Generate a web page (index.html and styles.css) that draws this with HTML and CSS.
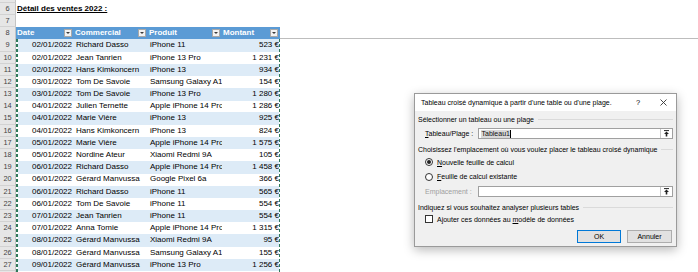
FILE: index.html
```html
<!DOCTYPE html>
<html lang="fr">
<head>
<meta charset="utf-8">
<title>Détail des ventes 2022</title>
<link rel="stylesheet" href="styles.css">
</head>
<body>
<div class="sheet">
  <div class="rows">
    <div class="row top"><div class="rh"></div></div>
    <div class="row"><div class="rh">6</div><div class="c title-cell">Détail des ventes 2022 :</div></div>
    <div class="row"><div class="rh">7</div></div>
    <div class="row hdr">
      <div class="rh">8</div>
      <div class="c h"><span>Date</span><span class="fb"></span></div>
      <div class="c h"><span>Commercial</span><span class="fb"></span></div>
      <div class="c h"><span>Produit</span><span class="fb"></span></div>
      <div class="c h"><span>Montant</span><span class="fb"></span></div>
    </div>
    <div class="row band"><div class="rh">9</div><div class="c r">02/01/2022</div><div class="c">Richard Dasso</div><div class="c">iPhone 11</div><div class="c r m">523&nbsp;€</div></div>
    <div class="row"><div class="rh">10</div><div class="c r">02/01/2022</div><div class="c">Jean Tanrien</div><div class="c">iPhone 13 Pro</div><div class="c r m">1&nbsp;231&nbsp;€</div></div>
    <div class="row band"><div class="rh">11</div><div class="c r">02/01/2022</div><div class="c">Hans Kimkoncern</div><div class="c">iPhone 13</div><div class="c r m">934&nbsp;€</div></div>
    <div class="row"><div class="rh">12</div><div class="c r">03/01/2022</div><div class="c">Tom De Savoie</div><div class="c">Samsung Galaxy A1</div><div class="c r m">154&nbsp;€</div></div>
    <div class="row band"><div class="rh">13</div><div class="c r">03/01/2022</div><div class="c">Tom De Savoie</div><div class="c">iPhone 13 Pro</div><div class="c r m">1&nbsp;280&nbsp;€</div></div>
    <div class="row"><div class="rh">14</div><div class="c r">04/01/2022</div><div class="c">Julien Ternette</div><div class="c">Apple iPhone 14 Pro</div><div class="c r m">1&nbsp;286&nbsp;€</div></div>
    <div class="row band"><div class="rh">15</div><div class="c r">04/01/2022</div><div class="c">Marie Vière</div><div class="c">iPhone 13</div><div class="c r m">925&nbsp;€</div></div>
    <div class="row"><div class="rh">16</div><div class="c r">04/01/2022</div><div class="c">Hans Kimkoncern</div><div class="c">iPhone 13</div><div class="c r m">824&nbsp;€</div></div>
    <div class="row band"><div class="rh">17</div><div class="c r">05/01/2022</div><div class="c">Marie Vière</div><div class="c">Apple iPhone 14 Pro</div><div class="c r m">1&nbsp;575&nbsp;€</div></div>
    <div class="row"><div class="rh">18</div><div class="c r">05/01/2022</div><div class="c">Nordine Ateur</div><div class="c">Xiaomi Redmi 9A</div><div class="c r m">105&nbsp;€</div></div>
    <div class="row band"><div class="rh">19</div><div class="c r">06/01/2022</div><div class="c">Richard Dasso</div><div class="c">Apple iPhone 14 Pro</div><div class="c r m">1&nbsp;458&nbsp;€</div></div>
    <div class="row"><div class="rh">20</div><div class="c r">06/01/2022</div><div class="c">Gérard Manvussa</div><div class="c">Google Pixel 6a</div><div class="c r m">366&nbsp;€</div></div>
    <div class="row band"><div class="rh">21</div><div class="c r">06/01/2022</div><div class="c">Richard Dasso</div><div class="c">iPhone 11</div><div class="c r m">565&nbsp;€</div></div>
    <div class="row"><div class="rh">22</div><div class="c r">06/01/2022</div><div class="c">Tom De Savoie</div><div class="c">iPhone 11</div><div class="c r m">554&nbsp;€</div></div>
    <div class="row band"><div class="rh">23</div><div class="c r">07/01/2022</div><div class="c">Jean Tanrien</div><div class="c">iPhone 11</div><div class="c r m">554&nbsp;€</div></div>
    <div class="row"><div class="rh">24</div><div class="c r">07/01/2022</div><div class="c">Anna Tomie</div><div class="c">Apple iPhone 14 Pro</div><div class="c r m">1&nbsp;315&nbsp;€</div></div>
    <div class="row band"><div class="rh">25</div><div class="c r">08/01/2022</div><div class="c">Gérard Manvussa</div><div class="c">Xiaomi Redmi 9A</div><div class="c r m">95&nbsp;€</div></div>
    <div class="row"><div class="rh">26</div><div class="c r">08/01/2022</div><div class="c">Gérard Manvussa</div><div class="c">Samsung Galaxy A1</div><div class="c r m">155&nbsp;€</div></div>
    <div class="row band"><div class="rh">27</div><div class="c r">09/01/2022</div><div class="c">Gérard Manvussa</div><div class="c">iPhone 13 Pro</div><div class="c r m">1&nbsp;256&nbsp;€</div></div>
    <div class="row"><div class="rh"></div></div>
  </div>

  <div class="ants"></div>

  <div class="dlg">
    <div class="dlg-title">
      <span class="ttl">Tableau croisé dynamique à partir d'une table ou d'une plage.</span>
      <span class="help">?</span>
      <span class="close"><svg width="7" height="7" viewBox="0 0 7 7"><path d="M0.5 0.5L6.5 6.5M6.5 0.5L0.5 6.5" stroke="#333" stroke-width="0.9" fill="none"/></svg></span>
    </div>
    <div class="dlg-body">
      <div class="grp g1"><span>Sélectionner un tableau ou une plage</span><i class="sep"></i></div>
      <div class="field"><span class="lbl"><u>T</u>ableau/Plage :</span><div class="inp"><span class="sel">Tableau1</span><span class="caret"></span><span class="pick"><svg width="7" height="7" viewBox="0 0 7 7"><path d="M1 0.6H6" stroke="#222" stroke-width="1"/><path d="M3.5 1.5L6 4H4.3V6.6H2.7V4H1Z" fill="#222"/></svg></span></div></div>
      <div class="grp g2"><span>Choisissez l'emplacement où vous voulez placer le tableau croisé dynamique</span><i class="sep"></i></div>
      <div class="opt o1"><span class="radio on"></span><span><u>N</u>ouvelle feuille de calcul</span></div>
      <div class="opt o2"><span class="radio"></span><span><u>F</u>euille de calcul existante</span></div>
      <div class="field"><span class="lbl dim">Emplacement :</span><div class="inp"><span class="pick"><svg width="7" height="7" viewBox="0 0 7 7"><path d="M1 0.6H6" stroke="#222" stroke-width="1"/><path d="M3.5 1.5L6 4H4.3V6.6H2.7V4H1Z" fill="#222"/></svg></span></div></div>
      <div class="grp g3"><span>Indiquez si vous souhaitez analyser plusieurs tables</span><i class="sep"></i></div>
      <div class="opt o3"><span class="chk"></span><span>Ajouter ces données au <u>m</u>odèle de données</span></div>
      <div class="btns"><span class="btn def">OK</span><span class="btn">Annuler</span></div>
    </div>
  </div>
</div>
</body>
</html>
```

FILE: styles.css
```css
* { box-sizing: border-box; }
html, body { margin: 0; padding: 0; background: #fff; }
body { width: 698px; height: 272px; overflow: hidden; font-family: "Liberation Sans", Arial, sans-serif; }

.sheet { position: relative; width: 698px; height: 272px; overflow: hidden; background: #fff; }

.rows { display: flex; flex-direction: column; }
.row {
  display: grid;
  grid-template-columns: 16px 58px 74px 74px 58px 1fr;
  height: 12.2px;
  flex: none;
  font-size: 8px;
  line-height: 12px;
  color: #000;
}
.row.top { height: 2.8px; }

.rh {
  background: #e6e6e6;
  border-right: 1px solid #c4c4c4;
  border-bottom: 1px solid #d2d2d2;
  color: #444;
  font-size: 7.4px;
  text-align: center;
  line-height: 11.5px;
}

.c { white-space: nowrap; overflow: hidden; padding: 0 2px; }
.r { text-align: right; }
.c.m { padding-right: 1px; overflow: visible; }

.title-cell {
  grid-column: 2 / span 3;
  font-weight: bold;
  text-decoration: underline;
  padding-left: 1px;
  overflow: visible;
}

.hdr { border-bottom: 1px solid #bdbdbd; }
.hdr .rh { border-bottom: none; }
.c.h {
  background: #5b9bd5;
  color: #fff;
  font-weight: bold;
  display: flex;
  align-items: center;
  justify-content: space-between;
  padding: 0 2px 0 1px;
}
.fb {
  width: 8px;
  height: 8px;
  flex: none;
  background: #f3f3f3;
  border: 1px solid #a8a8a8;
  display: flex;
  align-items: center;
  justify-content: center;
}
.fb::after {
  content: "";
  border-left: 2px solid transparent;
  border-right: 2px solid transparent;
  border-top: 2px solid #3a3a3a;
}

.band .c { background: #ddebf7; }

.ants {
  position: absolute;
  left: 16px;
  top: 39.4px;
  width: 264px;
  bottom: 0;
  pointer-events: none;
}
.ants::before, .ants::after {
  content: "";
  position: absolute;
  top: 0;
  bottom: 0;
  width: 2px;
  background: repeating-linear-gradient(to bottom, #2f7a5a 0 3px, rgba(255,255,255,0.9) 3px 5px);
}
.ants::before { left: 0; }
.ants::after { right: 0; width: 1.5px; }

/* Dialog */
.dlg {
  position: absolute;
  left: 414px;
  top: 93px;
  width: 263px;
  height: 154px;
  border: 1px solid #9a9a9a;
  background: #f0f0f0;
  box-shadow: 0 3px 10px rgba(0, 0, 0, 0.28);
  font-size: 7px;
  color: #000;
  display: flex;
  flex-direction: column;
}
.dlg-title {
  height: 17px;
  flex: none;
  background: #fff;
  display: flex;
  align-items: center;
  padding-left: 6px;
}
.ttl { flex: 1; white-space: nowrap; }
.help { width: 14px; text-align: center; font-size: 7.5px; }
.close { width: 26px; display: flex; justify-content: center; align-items: center; margin-left: 5px; }

.dlg-body {
  flex: 1;
  display: flex;
  flex-direction: column;
  padding: 0 3px 3px 3px;
}
.grp { display: flex; align-items: center; white-space: nowrap; height: 16px; flex: none; }
.grp.g1 { height: 17px; }
.grp.g2, .grp.g3 { margin-top: 2px; }
.sep { flex: 1; height: 1px; background: #dadada; margin-left: 4px; }

.field { display: flex; align-items: center; height: 11px; flex: none; padding-left: 7px; }
.lbl { width: 53px; flex: none; white-space: nowrap; }
.lbl.dim { color: #a0a0a0; }
.inp {
  flex: 1;
  height: 11px;
  background: #fff;
  border: 1px solid #a0a0a0;
  display: flex;
  align-items: center;
  padding-left: 2px;
}
.sel { background: #d8d8d8; color: #111; padding: 0 0.5px; line-height: 8px; }
.caret { width: 1px; height: 8px; background: #000; }
.pick {
  margin-left: auto;
  width: 12px;
  height: 9px;
  border-left: 1px solid #c8c8c8;
  display: flex;
  align-items: center;
  justify-content: center;
}

.opt { display: flex; align-items: center; padding-left: 7px; flex: none; gap: 4px; white-space: nowrap; }
.o1 { height: 10px; }
.o2 { height: 19px; }
.o3 { height: 8px; }
.radio {
  width: 8px; height: 8px; border-radius: 50%;
  border: 1px solid #333; background: #fff;
  display: flex; align-items: center; justify-content: center;
  flex: none;
}
.radio.on::after { content: ""; width: 4px; height: 4px; border-radius: 50%; background: #222; }
.chk { width: 8px; height: 8px; border: 1px solid #333; background: #fff; flex: none; }

.btns { display: flex; justify-content: flex-end; gap: 6px; margin-top: 7px; height: 13px; flex: none; padding-right: 1px; }
.btn {
  width: 45px;
  height: 13px;
  background: #e1e1e1;
  border: 1px solid #adadad;
  display: flex;
  align-items: center;
  justify-content: center;
}
.btn.def { width: 44px; border-color: #0078d7; }
```
